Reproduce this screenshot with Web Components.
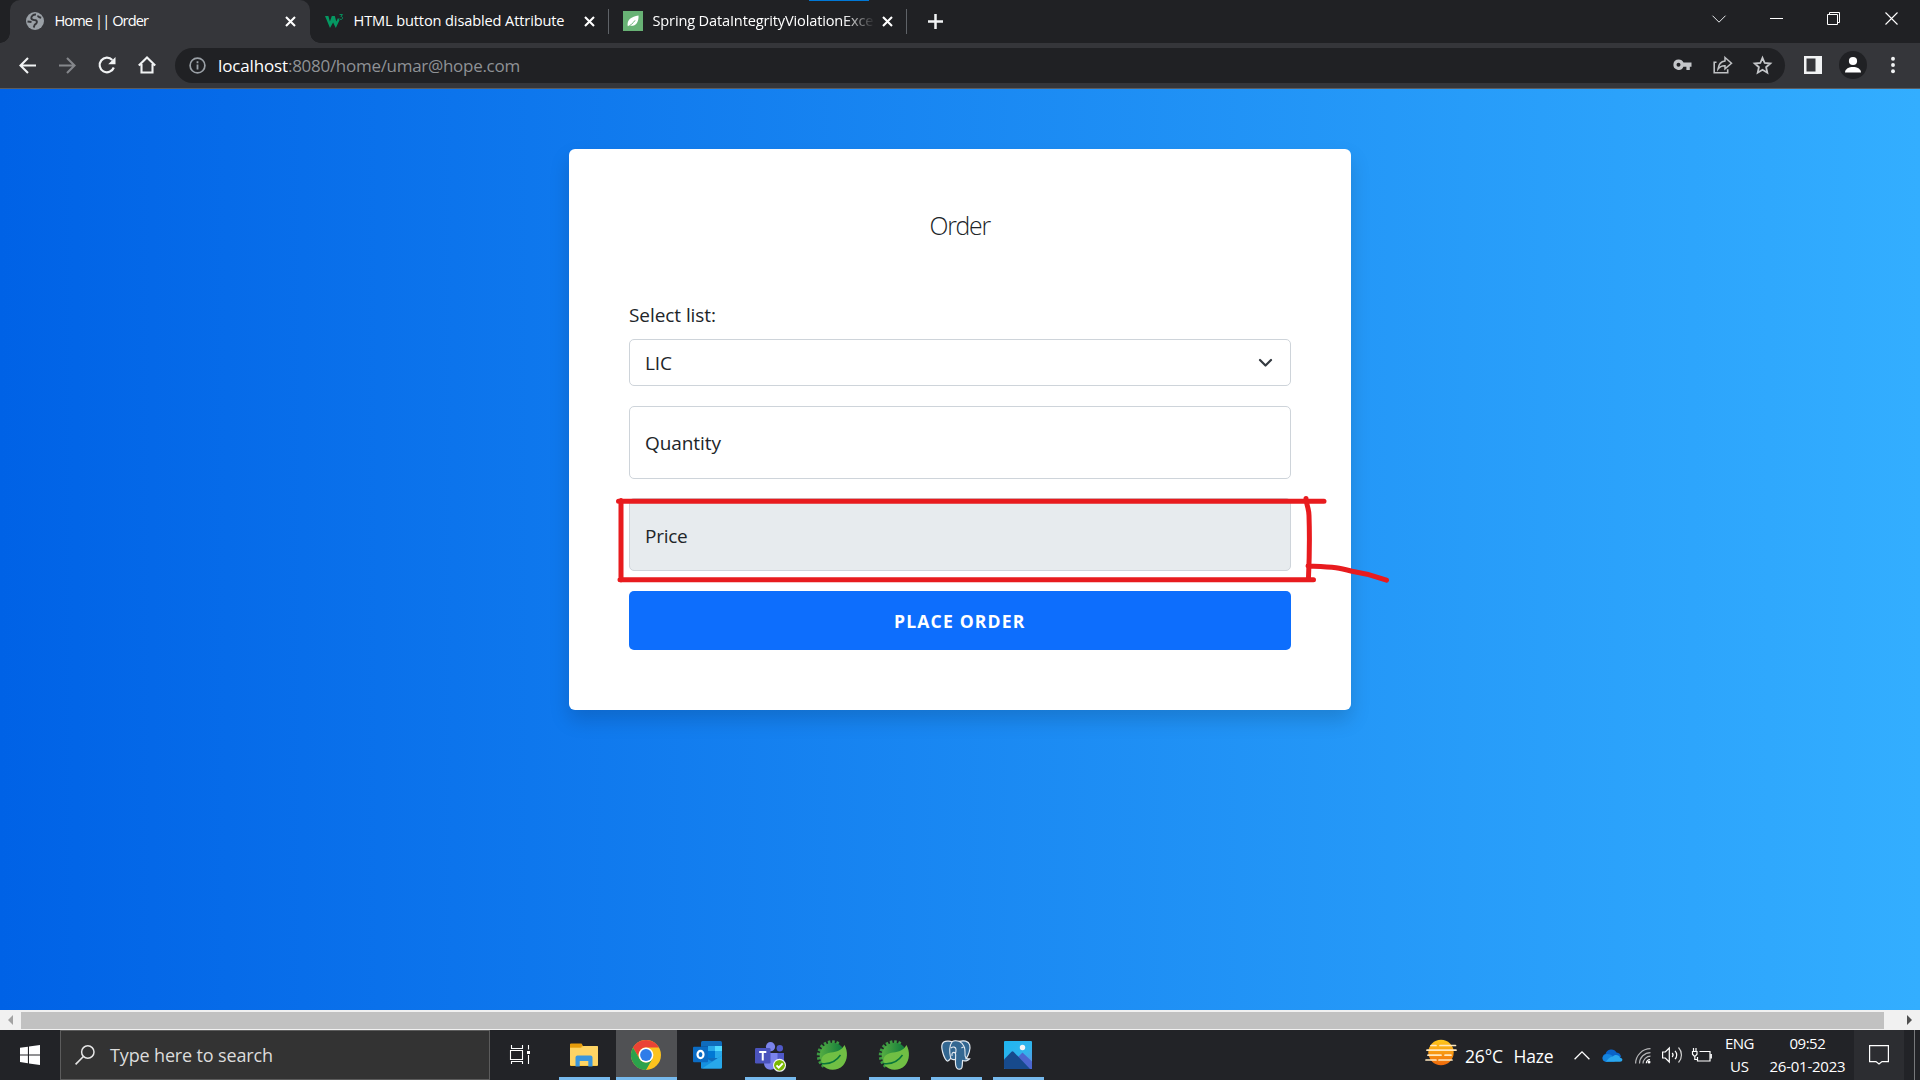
<!DOCTYPE html>
<html lang="en">
<head>
<meta charset="utf-8">
<title>Home || Order</title>
<style>
html,body{margin:0;height:1080px;width:1920px;overflow:hidden;background:#202124}
body{font-family:"Open Sans","Noto Sans",sans-serif}
</style>
</head>
<body>
<desktop-screen></desktop-screen>
<script>
const define=(name,html,setup)=>{
  const t=document.createElement('template');
  t.innerHTML=html;
  customElements.define(name,class extends HTMLElement{
    connectedCallback(){
      if(this.shadowRoot)return;
      this.attachShadow({mode:'open'}).appendChild(t.content.cloneNode(true));
      if(setup)setup(this,this.shadowRoot);
    }
  });
};

// One line of text, letter-spaced so that it fills the given width.
define('fit-text',`<style>:host{display:block;flex:none;white-space:pre}span{display:inline-block;white-space:pre}</style><span><slot></slot></span>`,(el,root)=>{
  const s=root.querySelector('span'),w=+el.getAttribute('width');
  s.style.letterSpacing='0px';
  const n=el.textContent.length;
  const d=(w-s.getBoundingClientRect().width)/(n-.5);
  s.style.letterSpacing=d.toFixed(3)+'px';
  el.style.width=w+'px';
});

// Icons: [width, height, markup]
const gear=(()=>{let s='';for(let a=132;a<=294;a+=18)s+=`<rect x="-1.300" y="-15.200" width="2.600" height="4" transform="translate(15 15.500) rotate(${a+90})" fill="#3d9a42"/>`;return s})();
const ICONS={
globe:[18,18,`<circle cx="9" cy="9" r="9" fill="#9aa0a6"/><path d="M10 2.500C7.500 2.300 5 4 5.300 6.300c.4 1.900 2.500 1.700 4.200 1.900 1.600.3 1.500 1.600 1.200 2.600-.4 1.300-1.800 1.300-2.200 2.400-.2.900-.3 1.500-1 2.300M1.500 9.500l4 .5M12 3.500c0 1.700 1.500 2 3.200 2.300" fill="none" stroke="#35363a" stroke-width="1.900"/>`],
w3:[20,16,`<path d="M1 3h3.400l1.500 5.400L7.800 3h3l1.500 5.400L14 5l1.600 2-3.800 8-2.700-5.600L6 15z" fill="#059862"/><path d="M15.500 1.600h3l-1.600 1.900c2.300.1 2.200 3-.1 2.900-.8 0-1.200-.4-1.400-.8" fill="none" stroke="#059862" stroke-width="1"/>`],
leaf:[20,20,`<path fill="#68b275" d="M0 0h20v20H0z"/><path d="M4.800 15.600C3.500 8.500 8.500 5.500 15.500 4.400 16 10.500 13 15.500 7 14.800z" fill="#fff"/><path d="M4 16.200c3.200-1.600 6-3.800 8-6.800" fill="none" stroke="#68b275" stroke-width="1"/>`],
x:[11,11,`<path d="M1 1l9 9M10 1l-9 9" stroke="#fff" stroke-width="2.100"/>`],
plus:[15,15,`<path d="M7.500 0v15M0 7.500h15" stroke="#f1f3f4" stroke-width="2.500"/>`],
tabchev:[14,8,`<path d="M.5.7l6.500 6.500L13.500.7" fill="none" stroke="#e8eaed" stroke-width="1"/>`],
min:[13,13,`<path d="M0 6.500h13" stroke="#fff"/>`],
restore:[13,13,`<path d="M.5 2.500h10v10H.500zM2.500 2.500v-2h10v10h-2" fill="none" stroke="#fff"/>`],
close:[13,13,`<path d="M.5.5l12 12M12.500.5l-12 12" stroke="#fff" stroke-width="1.100"/>`],
back:[17,17,`<path d="M17 8.500H2M9 1L1.500 8.500 9 16" fill="none" stroke="#f1f3f4" stroke-width="2.100"/>`],
fwd:[17,17,`<path d="M0 8.500h15M8 1l7.500 7.500L8 16" fill="none" stroke="#85878b" stroke-width="2.100"/>`],
reload:[18,18,`<path d="M15.800 11.500A7.300 7.300 0 1 1 14.300 4" fill="none" stroke="#f1f3f4" stroke-width="2.200"/><path d="M17.500 1v7.300h-7.300z" fill="#f1f3f4"/>`],
home:[18,18,`<path d="M.8 9.500L9 1.500l8.200 8M3.500 8v8.500h11V8" fill="none" stroke="#f1f3f4" stroke-width="2.100"/>`],
info:[17,17,`<circle cx="8.500" cy="8.500" r="7.400" fill="none" stroke="#9aa0a6" stroke-width="1.700"/><path d="M8.500 7.500v5M8.500 4.300v1.900" stroke="#9aa0a6" stroke-width="1.800"/>`],
key:[19,12,`<path d="M5.500.5a5.200 5.200 0 1 0 4.900 7.200h3V11h3.400V7.700H18.500V3.500h-8A5.200 5.200 0 0 0 5.500.5zm0 3.300a2 2 0 1 1 0 4 2 2 0 0 1 0-4z" fill="#c4c6c9"/>`],
share:[20,18,`<path d="M3.500 6.200H1.200v10.600h13.500v-3.500" fill="none" stroke="#bfc1c4" stroke-width="1.600"/><path d="M12 1.500l6.500 5.700L12 12.800V9.700C8.700 9.500 6.800 10.500 5 13c.5-4.200 2.900-7.600 7-8.100z" fill="none" stroke="#bfc1c4" stroke-width="1.500"/>`],
star:[19,18,`<path d="M9.500 1.800l2.200 5.200 5.600.5-4.200 3.700 1.200 5.500-4.800-2.900-4.800 2.900 1.200-5.500L1.700 7.500 7.300 7z" fill="none" stroke="#c4c6c9" stroke-width="1.800"/>`],
panel:[18,18,`<path d="M0 0h18v18H0z" fill="#f1f3f4"/><path d="M2.500 2.500h9v13h-9z" fill="#35363a"/>`],
avatar:[28,28,`<circle cx="14" cy="14" r="14" fill="#202124"/><circle cx="14" cy="10" r="4.100" fill="#fff"/><path d="M6 21.500c0-7.300 16-7.300 16 0z" fill="#fff"/>`],
dots:[4,18,`<circle cx="2" cy="2.700" r="1.950" fill="#f1f3f4"/><circle cx="2" cy="9" r="1.950" fill="#f1f3f4"/><circle cx="2" cy="15.300" r="1.950" fill="#f1f3f4"/>`],
selchev:[15,10,`<path d="M2 2l5.500 5.500L13 2" fill="none" stroke="#343a40" stroke-width="2.200" stroke-linecap="round" stroke-linejoin="round"/>`],
left:[5,10,`<path d="M5 0v10L0 5z" fill="#a3a3a3"/>`],
right:[5,10,`<path d="M0 0v10l5-5z" fill="#505050"/>`],
win:[20,20,`<path d="M0 2.800l7.900-1.100v7.700H0zM9 1.500L20 0v9.400H9zM0 10.400h7.900v7.800L0 17.100zM9 10.400h11V20L9 18.400z" fill="#fff"/>`],
search:[20,20,`<circle cx="12.800" cy="7" r="6.200" fill="none" stroke="#e6e6e6" stroke-width="1.500"/><path d="M8.400 11.500L.6 19.400" stroke="#e6e6e6" stroke-width="1.600"/>`],
task:[21,19,`<path d="M1.500 0v3.500h11V0M.5 5.500h12v9H.500zM1.500 19v-2.500h11V19M18.500 0v4.500M18.500 10v9" fill="none" stroke="#fff" stroke-width="1.100"/><path d="M17 6h3v3h-3z" fill="#fff"/>`],
folder:[28,24,`<path d="M0 2a1 1 0 0 1 1-1h10l2 2h14a1 1 0 0 1 1 1v18a1 1 0 0 1-1 1H1a1 1 0 0 1-1-1z" fill="#fcc83f"/><path d="M0 1.500A1 1 0 0 1 1 .6h10.500l1 1.500L11 4.700H0z" fill="#e69c0b"/><path d="M0 4.700h12L14 3h14v19H0z" fill="#ffe08a" opacity=".5"/><path d="M5.500 23.500v-9a2 2 0 0 1 2-2h13a2 2 0 0 1 2 2v9h-4.200V18h-8.600v5.500z" fill="#3a96dd"/>`],
chrome:[30,30,`<circle cx="15" cy="15" r="15" fill="#fcc31e"/><path d="M2 7.500A15 15 0 0 1 28 7.500H15A7.500 7.500 0 0 0 8.500 18.800z" fill="#ea4335"/><path d="M2 7.500A15 15 0 0 0 15 30l6.500-11.200A7.500 7.500 0 0 1 8.500 18.700z" fill="#2ba24c"/><circle cx="15" cy="15" r="7.400" fill="#fff"/><circle cx="15" cy="15" r="5.900" fill="#2f7de9"/>`],
outlook:[30,28,`<rect x="8" width="21" height="27" rx="1.500" fill="#0f6cbd"/><path d="M8 5h7v9H8z" fill="#0a5ca8"/><path d="M15 5h7v9h-7z" fill="#28a8ea"/><path d="M22 5h7v9h-7z" fill="#50d9ff"/><path d="M15 10h7v7h-7z" fill="#0078d4"/><path d="M22 10h7v7h-7z" fill="#28a8ea"/><path d="M8 14.500l11 6 10-6V26a1.500 1.500 0 0 1-1.500 1.500H8z" fill="#1490df"/><path d="M29 14.500V26a1.500 1.500 0 0 1-1.500 1.500H9z" fill="#28a8ea"/><rect y="5.800" width="15" height="15.500" rx="1" fill="#0b6cc4"/><ellipse cx="7.500" cy="13.500" rx="3" ry="3.600" fill="none" stroke="#fff" stroke-width="2.200"/>`],
teams:[32,30,`<circle cx="24.800" cy="6.300" r="3.200" fill="#5059c9"/><path d="M20 11h9v9a5 5 0 0 1-5 5h-4z" fill="#5059c9"/><circle cx="15.500" cy="4.700" r="4.600" fill="#7b83eb"/><path d="M9 11h13.500v9c0 10-13.500 10-13.500 1z" fill="#7b83eb"/><rect y="6" width="15.500" height="15.500" rx="1.200" fill="#4b53bc"/><path d="M4.200 10h7.100M7.750 10v8.500" stroke="#fff" stroke-width="2"/><circle cx="24.500" cy="23.300" r="6.500" fill="#f5f5f5"/><circle cx="24.500" cy="23.300" r="5.400" fill="#7ab800"/><path d="M21.500 23.300l2.200 2.300 4-4.300" fill="none" stroke="#fff" stroke-width="1.900"/>`],
spring:[30,30,`<defs><linearGradient id="g" x1="0" y1="0" x2="1" y2="0"><stop offset="0" stop-color="#55ad42"/><stop offset="1" stop-color="#08753b"/></linearGradient></defs>${gear}<circle cx="15.500" cy="15.500" r="12.700" fill="url(#g)"/><path d="M27.500 5C31 11 31 20 26 25.500 20 31.500 10 31 5.500 25c-3-7 .5-11.500 8.500-12.500 6-.8 10.500-2 13.500-7.500z" fill="#70bf44"/><path d="M4.500 23.500c8 1 14.500-2 19-8.500" fill="none" stroke="#08753b" stroke-width="1.500"/>`],
pg:[30,30,`<path d="M7 1.200C1 .8-.3 5 1.600 12c1.300 5 3.400 9.500 5.300 9 1-.2 1.800-1.500 2.800-2.600 1.300 1.400 3 1.600 4.800.8-.2 3 .2 7.500 1.400 9 1.500 1.700 4.300 1.200 5-.7.6-2.200.4-5 .7-7 2 .9 5.500.4 7-1.600l-3.400-.2c2.300-3.500 4.700-10 3.500-13.800C27.500.8 22.500.2 18.500 1.400 15.500.5 12.500.7 11 1.800 9.500 1.200 8.300 1 7 1.200z" fill="#336791" stroke="#e4eaf0" stroke-width="1.200"/><path d="M11 2C8 6 8.500 13 9.700 18.400M18.500 1.400c4 2 6 7 5.500 11-.3 2.600.2 4.500 1.200 6M14.500 19.200c0-3 1-5.700-.9-6.600-1.500-.7-3.300.6-2.500 3.400M10 8c2-1.800 5-1 5 1.500 0 2 0 3-.6 4M20.500 8c1-1 2.500-1.200 3.500-.5" fill="none" stroke="#e4eaf0" stroke-width="1.100"/>`],
photos:[28,28,`<defs><linearGradient id="p" x2="1" y2="1"><stop stop-color="#1eb4f0"/><stop offset=".6" stop-color="#32b4ec"/><stop offset="1" stop-color="#6f88dc"/></linearGradient></defs><rect width="28" height="28" rx="1" fill="url(#p)"/><path d="M12 18l6.500-6.500L28 20.500V28H12z" fill="#4b66cf"/><path d="M0 18.500l7.500-7.800a1.500 1.500 0 0 1 2 0L26 27.900H1a1 1 0 0 1-1-1z" fill="#174a8c"/><circle cx="18.500" cy="6.500" r="2.700" fill="#f5f5f5"/>`],
haze:[30,26,`<defs><linearGradient id="h" x2="0" y2="1"><stop stop-color="#ffc91b"/><stop offset="1" stop-color="#f06a0c"/></linearGradient></defs><circle cx="15" cy="12.500" r="12.700" fill="url(#h)"/><path d="M5 5.500h5M14 5.500h15.500M1 10.200h29M2 15.200h13M19 15.200h6M0 20h10M13 20h13" stroke="#ffe9c0" stroke-width="1.700" stroke-linecap="round"/>`],
chevup:[16,9,`<path d="M.6 8.300L8 .9l7.400 7.400" fill="none" stroke="#fff" stroke-width="1.300"/>`],
cloud:[21,13,`<path d="M4 12.800A4 4 0 0 1 3.500 5 6 6 0 0 1 14.500 3.500 5 5 0 0 1 19 8l-7 4.800z" fill="#0a63c9"/><path d="M4 12.800c-5-.5-4.500-7 .8-7.800 2-.3 4 .6 6 2L5 12.800z" fill="#1484de"/><path d="M4 12.800c2-3 4-5 7-5.500 2-2 6.500-1.500 7 1.500 3.200 0 3.200 4 0 4z" fill="#2aa7ee"/>`],
wifi:[16,16,`<path d="M.6 15.500A15 15 0 0 1 15.500.7M4.500 15.500A11 11 0 0 1 15.500 4.600M8 15.500a7.500 7.500 0 0 1 7.500-7.300" fill="none" stroke="#b5b5b7" stroke-width="1.200"/><path d="M11.300 15.200a4 4 0 0 1 3.700-3.700" fill="none" stroke="#fff" stroke-width="1.200"/><circle cx="14" cy="14" r="1.500" fill="#fff"/>`],
sound:[21,18,`<path d="M.6 6h2.700l4-4v14l-4-4H.600z" fill="none" stroke="#fff" stroke-width="1.200"/><path d="M10.200 7a3 3 0 0 1 0 4M13 4.800a6 6 0 0 1 0 8.400" fill="none" stroke="#fff" stroke-width="1.200"/><path d="M16.500 1.500a11 11 0 0 1 0 15" fill="none" stroke="#d0d0d0" stroke-width="1.200"/>`],
battery:[20,15,`<path d="M7.500 3.500h10.500v9.500H5.500V9M19.300 6v4.500M1.500 0v3M4 0v3M.5 3.500H5v2.700L3.500 8h-1.500L.5 6.200zM2.800 8v3.500h2.700" fill="none" stroke="#fff" stroke-width="1.200"/>`],
note:[20,20,`<path d="M.6.6h18.800v16H13L10 19l-3-2.400H.600z" fill="none" stroke="#fff" stroke-width="1.200"/>`]
};
define('ui-icon',`<style>:host{display:block;flex:none}svg{display:block;overflow:visible}</style>`,(el,root)=>{
  const [w,h,m]=ICONS[el.getAttribute('name')];
  el.style.width=w+'px';el.style.height=h+'px';
  root.innerHTML+=`<svg width="${w}" height="${h}" viewBox="0 0 ${w} ${h}">${m}</svg>`;
});

define('browser-tab',`<style>
:host{display:flex;align-items:center;height:43px;box-sizing:border-box;padding-bottom:1px;color:#fff;font-size:14.600px;line-height:38px;flex:none}
:host([active]){background:#35363a;border-radius:10px 10px 0 0}
:host([sep]){background:linear-gradient(#5f6368,#5f6368) right 9px/1px 25px no-repeat}
.i{width:20px;display:flex;justify-content:center;margin-left:15px}
:host([sep]) .i{margin-left:14px}
.t{flex:1;margin-left:9.500px;overflow:hidden;height:40px;min-width:0;margin-right:6px}
:host([tight]) .t{-webkit-mask:linear-gradient(to right,#000 190px,transparent 222px);mask:linear-gradient(to right,#000 190px,transparent 222px)}
.x{margin-right:14.500px}
:host([tight]) .x{margin-right:14px}
</style><div class="i"><slot name="icon"></slot></div><div class="t"><slot></slot></div><ui-icon class="x" name="x"></ui-icon>`,(el)=>{el.style.width=el.getAttribute('width')+'px'});

define('tab-strip',`<style>
:host{display:flex;height:43px;background:#202124;padding-left:10px;position:relative}
.accent{position:absolute;left:809px;top:0;width:60px;height:1px;background:#0078d7}
.foot{position:absolute;bottom:0;width:10px;height:10px}
.l{left:0;background:radial-gradient(circle at 0 0,transparent 9.500px,#35363a 10px)}
.r{left:310px;background:radial-gradient(circle at 100% 0,transparent 9.500px,#35363a 10px)}
.plus{margin:14px 0 0 20.500px}
.ctl{display:flex;margin-left:auto;height:37px;align-items:center}
</style>
<browser-tab active width="300"><ui-icon slot="icon" name="globe"></ui-icon><fit-text width="94">Home || Order</fit-text></browser-tab>
<browser-tab sep width="299"><ui-icon slot="icon" name="w3"></ui-icon><fit-text width="211">HTML button disabled Attribute</fit-text></browser-tab>
<browser-tab sep tight width="298"><ui-icon slot="icon" name="leaf"></ui-icon><fit-text width="221">Spring DataIntegrityViolationExce</fit-text></browser-tab>
<ui-icon class="plus" name="plus"></ui-icon>
<div class="ctl"><ui-icon name="tabchev" style="margin-right:44px"></ui-icon><ui-icon name="min" style="margin-right:44px"></ui-icon><ui-icon name="restore" style="margin-right:45px"></ui-icon><ui-icon name="close" style="margin-right:22px"></ui-icon></div>
<i class="accent"></i><i class="foot l"></i><i class="foot r"></i>`);

define('address-bar',`<style>
:host{display:flex;align-items:center;height:46px;box-sizing:border-box;background:#35363a;border-bottom:1px solid #5b5d61;padding:0 0 1px 19px}
.nav{display:flex;align-items:center;width:156px;gap:23px}
.box{display:flex;align-items:center;width:1610px;height:35px;border-radius:18px;background:#202124;box-sizing:border-box;padding:0 13px 0 13.500px;font-size:17px;line-height:34px;color:#8f9296}
.box fit-text{margin-top:1.500px}
.box fit-text:first-of-type{color:#fff;margin-left:12.500px}
.acts{display:flex;align-items:center;gap:20.500px;margin-left:auto}
.end{display:flex;align-items:center}
</style>
<div class="nav"><ui-icon name="back"></ui-icon><ui-icon name="fwd"></ui-icon><ui-icon name="reload" style="margin-left:-1px"></ui-icon><ui-icon name="home" style="margin-left:-1px"></ui-icon></div>
<div class="box"><ui-icon name="info"></ui-icon><fit-text width="70">localhost</fit-text><fit-text width="232">:8080/home/umar@hope.com</fit-text>
<div class="acts"><ui-icon name="key"></ui-icon><ui-icon name="share"></ui-icon><ui-icon name="star"></ui-icon></div></div>
<div class="end"><ui-icon name="panel" style="margin-left:18.500px"></ui-icon><ui-icon name="avatar" style="margin-left:17.500px"></ui-icon><ui-icon name="dots" style="margin-left:23.500px"></ui-icon></div>`);

define('form-field',`<style>
:host{display:flex;align-items:center;justify-content:space-between;box-sizing:border-box;height:73px;border:1px solid #ced4da;border-radius:5px;background:#fff;padding:2px 17.500px 0 15px;line-height:30px}
:host([select]){height:47px}
:host([disabled]){background:#e7ebee}
</style><slot></slot>`);

define('order-card',`<style>
:host{display:flex;flex-direction:column;box-sizing:border-box;width:782px;height:561px;border-radius:6px;background:#fff;box-shadow:0 10px 20px rgba(0,0,0,.15);padding:60px;color:#212529;font-size:19px}
h5{margin:0;display:flex;justify-content:center;font-weight:300;font-size:24.800px;line-height:32px;height:91px}
.label{height:39px;line-height:30px}
form-field{margin-bottom:20px}
button{all:unset;display:flex;justify-content:center;align-items:center;height:59px;border-radius:5px;background:#0d6efd;color:#fff;font-weight:700;font-size:17.600px;line-height:30px}
button fit-text{margin-top:1px;margin-left:-1px}
</style>
<h5><fit-text width="61">Order</fit-text></h5>
<div class="label"><fit-text width="87">Select list:</fit-text></div>
<form-field select><fit-text width="27">LIC</fit-text><ui-icon name="selchev"></ui-icon></form-field>
<form-field style="height:74px;margin-bottom:19px"><fit-text width="76">Quantity</fit-text></form-field>
<form-field disabled><fit-text width="42.500">Price</fit-text></form-field>
<button><fit-text width="131">PLACE ORDER</fit-text></button>`);

define('page-view',`<style>
:host{display:flex;justify-content:center;align-items:flex-start;box-sizing:border-box;height:921px;padding-top:60px;background:linear-gradient(to right,#0062e6,#33aeff);position:relative}
svg{position:absolute;left:0;top:0;pointer-events:none}
</style><order-card></order-card>
<svg width="1920" height="921" viewBox="0 89 1920 921" fill="none" stroke="#e81b1e" stroke-width="5" stroke-linecap="round" stroke-linejoin="round"><path d="M618.500 501.200H1324M621 500.500V580M620 579.800H1313.500M1306 498.500c0 5 3 10 3 17 .7 20 .5 40-.5 62M1308 566c9 .4 19 .6 28 1.700 5 .8 10 2 16 3.500l15 3 19.500 6"/></svg>`);

define('scroll-bar',`<style>:host{display:flex;align-items:center;height:20px;background:#f1f1f1}
.thumb{width:1863px;height:17px;background:#c1c1c1;margin:1px 23px 0 8px}ui-icon{margin-left:0}ui-icon:first-of-type{margin-left:8px}</style>
<ui-icon name="left"></ui-icon><div class="thumb"></div><ui-icon name="right"></ui-icon>`);

define('task-button',`<style>:host{display:flex;align-items:center;justify-content:center;width:62px;height:50px;box-sizing:border-box;flex:none}
:host([open]){background:linear-gradient(#76b9ed,#76b9ed) 50% 100%/51px 3px no-repeat}
:host([active]){background:linear-gradient(#76b9ed,#76b9ed) 0 100%/100% 3px no-repeat,#505154;width:61px}
</style><slot></slot>`);

define('task-bar',`<style>
:host{display:flex;height:50px;background:#222327;color:#fff;align-items:stretch}
.start{width:60px;display:flex;align-items:center;justify-content:center}
.search{width:430px;box-sizing:border-box;border:1px solid #5c5c5c;background:#333;display:flex;align-items:center;padding-left:14px;color:#dcdcdc;font-size:18px;line-height:48px}
.search fit-text{margin-left:15px}
.task{width:63px;display:flex;align-items:center;padding-left:19.500px;box-sizing:border-box;padding-bottom:1px}
.tray{display:flex;align-items:center;margin-left:auto;font-size:16.500px}
.tray>*{flex:none}
.col{display:flex;flex-direction:column;align-items:center;font-size:15px;line-height:22.500px;padding-bottom:1px}
.note{width:50px;height:50px;background:#2c2d31;display:flex;align-items:center;justify-content:center;margin-left:8.500px}
.peek{width:5px;height:50px;border-left:1px solid #77787b;margin-left:10px}
</style>
<div class="start"><ui-icon name="win"></ui-icon></div>
<div class="search"><ui-icon name="search"></ui-icon><fit-text width="163">Type here to search</fit-text></div>
<div class="task"><ui-icon name="task"></ui-icon></div>
<task-button open><ui-icon name="folder"></ui-icon></task-button>
<task-button active style="margin-left:1px"><ui-icon name="chrome" style="margin-right:1px"></ui-icon></task-button>
<task-button><ui-icon name="outlook"></ui-icon></task-button>
<task-button open><ui-icon name="teams" style="margin:3px 0 0 1px"></ui-icon></task-button>
<task-button><ui-icon name="spring"></ui-icon></task-button>
<task-button open><ui-icon name="spring"></ui-icon></task-button>
<task-button open><ui-icon name="pg"></ui-icon></task-button>
<task-button open><ui-icon name="photos"></ui-icon></task-button>
<div class="tray">
<ui-icon name="haze" style="margin-top:-5px"></ui-icon>
<fit-text width="38" style="margin:1.500px 0 0 9.500px;font-size:17.500px">26°C</fit-text>
<fit-text width="40" style="margin:1.500px 0 0 10.500px;font-size:17.500px">Haze</fit-text>
<ui-icon name="chevup" style="margin-left:20px"></ui-icon>
<ui-icon name="cloud" style="margin-left:12px"></ui-icon>
<ui-icon name="wifi" style="margin-left:12px;margin-top:2px"></ui-icon>
<ui-icon name="sound" style="margin-left:11px"></ui-icon>
<ui-icon name="battery" style="margin-left:9px"></ui-icon>
<div class="col" style="margin-left:13.500px"><fit-text width="29">ENG</fit-text><fit-text width="19">US</fit-text></div>
<div class="col" style="margin-left:15.500px"><fit-text width="36">09:52</fit-text><fit-text width="76">26-01-2023</fit-text></div>
<div class="note"><ui-icon name="note"></ui-icon></div><div class="peek"></div>
</div>`);

define('desktop-screen',`<style>:host{display:flex;flex-direction:column;width:1920px;height:1080px}
:host>*{flex:none}</style><tab-strip></tab-strip><address-bar></address-bar><page-view></page-view><scroll-bar></scroll-bar><task-bar></task-bar>`);
</script>
</body>
</html>
